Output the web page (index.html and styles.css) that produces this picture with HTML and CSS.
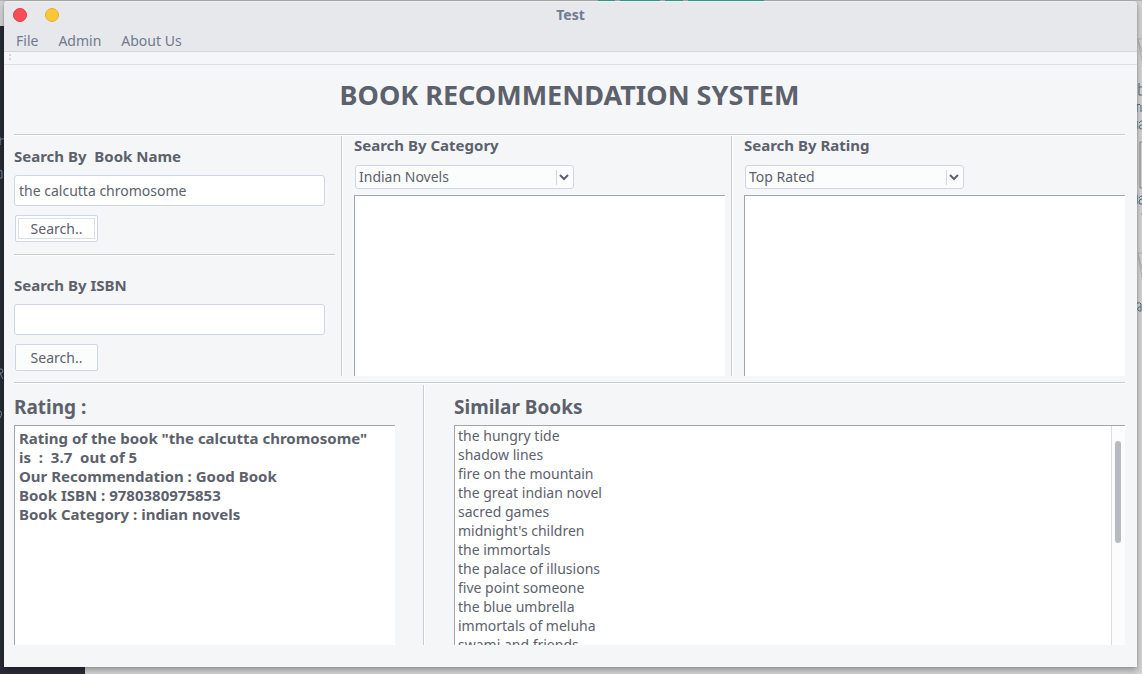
FILE: index.html
```html
<!DOCTYPE html>
<html lang="en">
<head>
<meta charset="utf-8">
<title>Test</title>
<link rel="stylesheet" href="styles.css">
</head>
<body>
<div class="desktop" aria-hidden="true">
  <div class="top-strip"><i></i><i></i><i></i><i></i></div>
  <div class="left-strip"></div>
  <div class="bottom-strip"></div>
  <svg class="left-marks" width="4" height="674" fill="none" stroke="#79899c">
    <path d="M0 137v8M0 140q2-2 4-1M0 171q2-2 2 1v6H0M0 369h2q2 2 0 4H0l3 6M0 411q3 2 0 7"/>
  </svg>
  <svg class="right-marks" width="5" height="674" fill="none" stroke="#486780">
    <path d="M1 39h4M1 39l4 22M2 42l3 10M1 253h4M1 253l4 25M2 257l3 12" stroke="#b0b0b0"/>
    <path d="M2 83v12M2 88q2-2 3-1M2 95h3M0 104v8M0 105q4-2 4 2v5M0 121v8M5 121q-2 0-3 2M5 125q-3 0-3 2t3 2M0 195v9M5 196q-2 0-3 2M5 199q-3 0-3 3t3 2M0 303q3-1 4 1v7H2q-3-2 0-4h2"/>
    <path d="M5 142H3v46h2" stroke="#858585"/>
    <path d="M4 214h1" stroke="#b07840"/>
  </svg>
</div>
<div class="window">
  <header class="chrome">
    <div class="titlebar">
      <div class="controls">
        <button class="dot close" aria-label="Close"></button>
        <button class="dot minimise" aria-label="Minimise"></button>
      </div>
      <span class="title">Test</span>
    </div>
    <nav class="menubar">
      <button class="menu">File</button>
      <button class="menu">Admin</button>
      <button class="menu">About Us</button>
    </nav>
  </header>
  <div class="toolbar"><span class="grip"></span></div>
  <main class="content">
    <h1 class="heading">BOOK RECOMMENDATION SYSTEM</h1>
    <section class="searches">
      <div class="panel lookup">
        <form class="form">
          <label class="label" for="name">Search By&nbsp; Book Name</label>
          <input class="field" id="name" type="text" value="the calcutta chromosome">
          <button class="button focused" type="button">Search..</button>
        </form>
        <hr class="rule">
        <form class="form">
          <label class="label" for="isbn">Search By ISBN</label>
          <input class="field" id="isbn" type="text">
          <button class="button" type="button">Search..</button>
        </form>
      </div>
      <div class="panel category">
        <label class="label" for="category">Search By Category</label>
        <div class="combo">
          <select class="select" id="category"><option>Indian Novels</option></select>
          <svg class="arrow" width="18" height="15" viewBox="0 0 18 15"><path d="M.5 0v15" stroke="#cfd6e6"/><path d="M4 5l4 4 4-4" fill="none" stroke="#5c616c" stroke-width="2"/></svg>
        </div>
        <div class="box"></div>
      </div>
      <div class="panel by-rating">
        <label class="label" for="rating">Search By Rating</label>
        <div class="combo">
          <select class="select" id="rating"><option>Top Rated</option></select>
          <svg class="arrow" width="18" height="15" viewBox="0 0 18 15"><path d="M.5 0v15" stroke="#cfd6e6"/><path d="M4 5l4 4 4-4" fill="none" stroke="#5c616c" stroke-width="2"/></svg>
        </div>
        <div class="box"></div>
      </div>
    </section>
    <section class="results">
      <div class="result rating">
        <h2 class="subheading">Rating :</h2>
        <div class="box details">
          <p>Rating of the book "the calcutta chromosome"<br>is&nbsp; :&nbsp; 3.7&nbsp; out of 5</p>
          <p>Our Recommendation : Good Book</p>
          <p>Book ISBN : 9780380975853</p>
          <p>Book Category : indian novels</p>
        </div>
      </div>
      <div class="result similar">
        <h2 class="subheading">Similar Books</h2>
        <div class="box listing">
          <ul class="books">
            <li>the hungry tide</li>
            <li>shadow lines</li>
            <li>fire on the mountain</li>
            <li>the great indian novel</li>
            <li>sacred games</li>
            <li>midnight's children</li>
            <li>the immortals</li>
            <li>the palace of illusions</li>
            <li>five point someone</li>
            <li>the blue umbrella</li>
            <li>immortals of meluha</li>
            <li>swami and friends</li>
          </ul>
          <div class="scrollbar"><div class="thumb"></div></div>
        </div>
      </div>
    </section>
  </main>
</div>
</body>
</html>
```
FILE: styles.css
```css
* { box-sizing: border-box; }
body {
  margin: 0;
  height: 100vh;
  padding: 1px 5px 7px 4px;
  overflow: hidden;
  background: #d2d2d2;
  color: #5c616c;
  font: 14px/19px "Noto Sans", "Open Sans", sans-serif;
}
h1, h2, p, ul, hr { margin: 0; padding: 0; }
button, input, select { font: inherit; color: inherit; margin: 0; }

/* what shows around the window */
.desktop { position: absolute; inset: 0; overflow: hidden; }
.top-strip { display: flex; gap: 5px; height: 1px; padding-left: 598px; background: #b5b3b2; }
.top-strip i { width: 17px; background: #35a79c; }
.top-strip i:nth-child(2) { width: 40px; }
.top-strip i:nth-child(3) { width: 18px; }
.top-strip i:nth-child(4) { width: 76px; }
.left-strip { position: absolute; left: 0; top: 26px; bottom: 0; width: 4px; background: #272a34; }
.bottom-strip { position: absolute; left: 0; bottom: 0; width: 85px; height: 8px; background: #292b37; }
.left-marks { position: absolute; left: 0; top: 0; }
.right-marks { position: absolute; right: 0; top: 0; }

.window {
  position: relative;
  display: flex;
  flex-direction: column;
  height: 100%;
  border-radius: 4px 4px 0 0;
  background: #f5f6f8;
  box-shadow: 0 0 1px rgba(0, 0, 0, .5), 0 3px 6px rgba(0, 0, 0, .3);
}
.chrome {
  border-radius: 4px 4px 0 0;
  background: #e7e8eb;
  border-bottom: 1px solid #d3d6dd;
  box-shadow: inset 0 1px #f0f1f3;
  color: #707a91;
}
.titlebar { display: grid; grid-template-columns: 1fr auto 1fr; align-items: center; height: 28px; }
.controls { display: flex; gap: 18px; padding-left: 9px; }
.dot { width: 14px; height: 14px; padding: 0; border: 1px solid #e33b46; border-radius: 50%; background: #f54e57; }
.minimise { border-color: #e5b02f; background: #fbc637; }
.title { padding-bottom: 2px; font-weight: 700; }
.menubar { display: flex; gap: 20px; height: 22px; padding-left: 12px; }
.menu { padding: 0; border: 0; background: none; line-height: 24px; }
.toolbar { flex: none; height: 13px; padding: 2px 5px; border-bottom: 1px solid #dae0ea; }
.grip { display: block; width: 2px; height: 6px; border: solid #cfd6e6; border-width: 2px 0; }

.content { flex: 1; min-height: 0; display: flex; flex-direction: column; padding: 0 12px 22px 10px; }
.heading { height: 69px; font-size: 27px; line-height: 60px; font-weight: 700; text-align: center; }
.searches {
  display: grid;
  grid-template-columns: 321fr 390fr 400fr;
  height: 242px;
  border-top: 1px solid #c9cbce;
  box-shadow: inset 0 1px #fff;
}
.panel { display: flex; flex-direction: column; min-width: 0; }
.lookup { padding-top: 12px; }
.category, .by-rating {
  margin: 1px 0 0 6px;
  padding-left: 12px;
  border-left: 1px solid #c9cbce;
  box-shadow: inset 1px 0 #fff;
}
.label { font-size: 15px; line-height: 18px; font-weight: 700; white-space: nowrap; }
.form { display: flex; flex-direction: column; align-items: flex-start; gap: 9px; }
.form .label { padding-bottom: 1px; }
.field { width: calc(100% - 10px); height: 31px; padding: 0 4px 1px; border: 1px solid #cfd6e6; border-radius: 3px; background: #fff; }
.button { width: 83px; height: 27px; margin-left: 1px; padding: 0; border: 1px solid #cfd6e6; border-radius: 2px; background: #fbfdfc; }
.focused { background: #fff; outline: 1px solid #dae0ea; outline-offset: -4px; }
.rule { height: 2px; margin: 12px 0 20px; border: 0; border-top: 1px solid #c9cbce; background: #fff; }
.combo { display: grid; width: 219px; height: 24px; margin: 11px 0 6px 1px; align-items: center; }
.select { grid-area: 1 / 1; height: 24px; padding: 0 3px 1px; border: 1px solid #cfd6e6; border-radius: 3px; background: #fbfdfc; appearance: none; }
.arrow { grid-area: 1 / 1; justify-self: end; pointer-events: none; }
.box { flex: 1; min-height: 0; border: solid #a2a5ac; border-width: 1px 0 0 1px; background: #fff; }

.results {
  flex: 1;
  min-height: 0;
  display: grid;
  grid-template: minmax(0, 1fr) / 381fr 730fr;
  margin-top: 6px;
  padding-top: 2px;
  border-top: 1px solid #c9cbce;
  box-shadow: inset 0 1px #fff;
}
.result { display: flex; flex-direction: column; min-width: 0; min-height: 0; }
.similar { margin-left: 28px; padding-left: 30px; border-left: 1px solid #c9cbce; box-shadow: inset 1px 0 #fff; }
.subheading { height: 40px; padding-top: 8px; font-size: 19px; line-height: 28px; font-weight: 700; }
.details { padding: 3px 4px; font-size: 15px; font-weight: 700; white-space: nowrap; overflow: hidden; }
.listing { display: flex; overflow: hidden; }
.books { flex: 1; padding-left: 3px; overflow: hidden; list-style: none; }
.scrollbar { width: 14px; padding: 15px 4px 0 3px; border-left: 1px solid #dbdce0; background: #fcfcfc; }
.thumb { height: 102px; border-radius: 3px; background: #b8babf; }
```
